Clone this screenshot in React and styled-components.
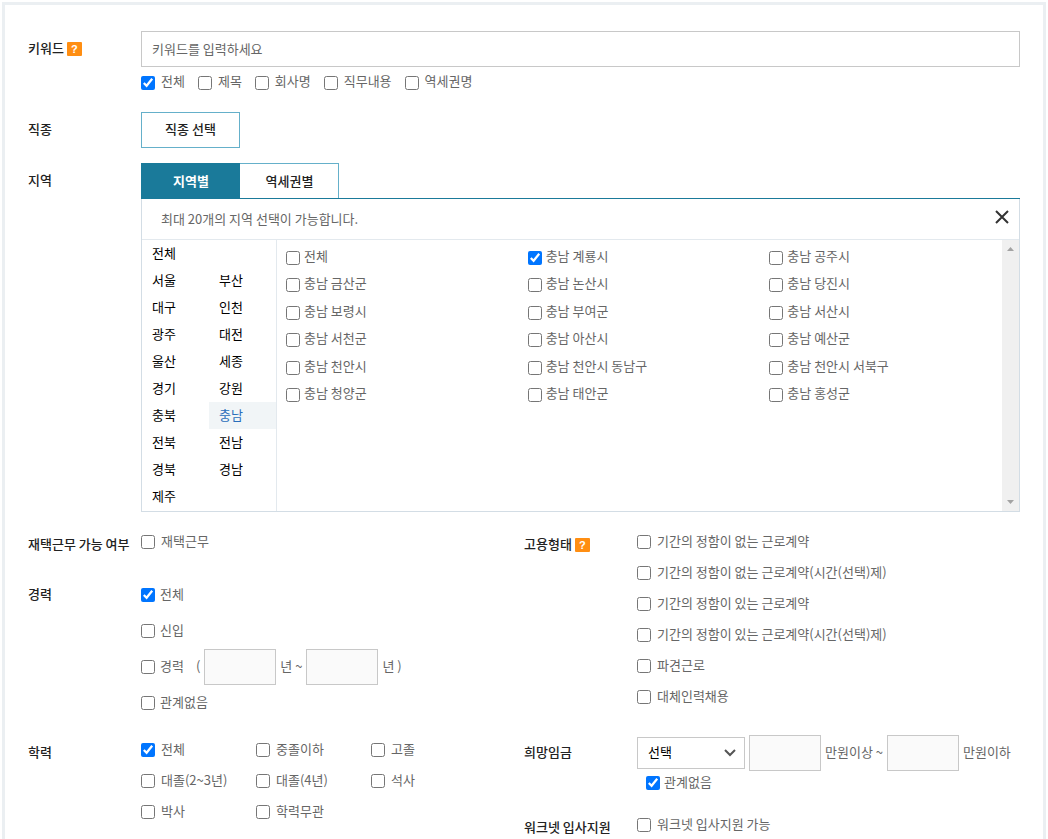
import React, { useState } from "react";
import styled, { createGlobalStyle, css } from "styled-components";

const GlobalStyle = createGlobalStyle`
  *, *::before, *::after { box-sizing: border-box; }
  html { background: #fff; }
  body {
    margin: 0;
    color: #666;
    font: 13px/20px "Noto Sans CJK KR", "Noto Sans", sans-serif;
  }
  button, input, select { font: inherit; color: inherit; }
  ul { margin: 0; padding: 0; list-style: none; }
`;

const Panel = styled.form`
  margin: 2px 2px 0;
  min-height: calc(100vh - 2px);
  padding: 26px 23px 0;
  border: 3px solid #ebeff2;
  border-bottom: 0;
  background: #fff;
`;

const Stack = styled.div`
  display: flex;
  flex-direction: column;
  gap: 15px;
`;

const Columns = styled.div`
  display: grid;
  grid-template-columns: 1fr 1fr;
  align-items: start;
  margin-top: ${(p) => (p.$first ? 15 : 14)}px;
`;

const Field = styled.div`
  display: grid;
  grid-template-columns: 113px minmax(0, 1fr);
  align-items: start;
  min-height: 35px;
`;

const FieldTitle = styled.div`
  display: flex;
  align-items: center;
  gap: 3px;
  line-height: 34px;
  font-weight: 500;
  color: #222;
  white-space: nowrap;
`;

const HelpButton = styled.button`
  width: 15px;
  height: 14px;
  margin-top: 2px;
  padding: 0;
  border: 0;
  border-radius: 1px;
  background: #ff8e12;
  color: #fff;
  font: bold 11px/14px "Liberation Sans", sans-serif;
  cursor: pointer;
`;

const KeywordInput = styled.input`
  display: block;
  width: 100%;
  height: 36px;
  padding: 0 10px 2px;
  border: 1px solid #c8c8c8;
  border-radius: 0;
  background: #fff;
  &::placeholder { color: #666; opacity: 1; }
`;

const CheckLabel = styled.label`
  display: flex;
  align-items: center;
  gap: ${(p) => p.$gap ?? 6}px;
  padding-bottom: 2px;
  white-space: nowrap;
`;

const CheckBox = styled.input`
  flex: none;
  width: 14px;
  height: 14px;
  margin: 2px 0 0;
`;

const InlineChecks = styled.div`
  display: flex;
  flex-wrap: wrap;
  gap: 0 13px;
  min-height: 30px;
  align-items: center;
  ${CheckBox} { margin-top: 4px; }
`;

const CheckList = styled.div`
  display: grid;
  grid-template-columns: ${(p) => (p.$columns ? `repeat(${p.$columns}, 115px)` : "auto")};
  grid-auto-rows: ${(p) => (p.$tall ? 36 : 31)}px;
  > ${CheckLabel} { padding-bottom: ${(p) => (p.$tall ? 2 : 4)}px; }
`;

const OutlineButton = styled.button`
  width: 99px;
  height: 36px;
  padding: 0 0 2px;
  border: 1px solid #65b0ca;
  background: #fff;
  color: #222;
  font-weight: 500;
  cursor: pointer;
`;

const TabBar = styled.div`
  display: flex;
  height: 36px;
  border-bottom: 1px solid #1a7a9a;
`;

const Tab = styled.button`
  width: 99px;
  padding: 0 0 1px 1px;
  border: 1px solid #65b0ca;
  border-width: 1px 1px 0 0;
  background: #fff;
  color: #222;
  font-weight: 500;
  cursor: pointer;
  ${(p) =>
    p.$active &&
    css`
      border-left-width: 1px;
      border-color: #1a7a9a;
      background: #1a7a9a;
      color: #fff;
      font-weight: 700;
    `}
`;

const RegionBox = styled.div`
  border: 1px solid #d3dde5;
  border-top: 0;
`;

const RegionHead = styled.div`
  display: flex;
  align-items: center;
  justify-content: space-between;
  height: 41px;
  padding: 0 10px 0 19px;
  border-bottom: 1px solid #e3e9ee;
`;

const CloseButton = styled.button`
  display: flex;
  padding: 0 0 5px;
  border: 0;
  background: none;
  color: #333;
  cursor: pointer;
`;

const RegionBody = styled.div`
  display: flex;
  min-height: 271px;
`;

const ProvinceList = styled.ul`
  display: grid;
  flex: none;
  grid-template-columns: 67px 67px;
  grid-auto-rows: 27px;
  align-content: start;
  border-right: 1px solid #e3e9ee;
`;

const Province = styled.li`
  grid-column: ${(p) => (p.$wide ? "1 / -1" : "auto")};
`;

const ProvinceButton = styled.button`
  display: block;
  width: 100%;
  height: 27px;
  padding: 0 10px 2px;
  border: 0;
  background: ${(p) => (p.$active ? "#f1f5f7" : "none")};
  color: ${(p) => (p.$active ? "#2a6ebb" : "#000")};
  text-align: left;
  cursor: pointer;
`;

const CityList = styled.div`
  display: grid;
  flex: 1;
  grid-template-columns: repeat(3, minmax(0, 1fr));
  grid-template-rows: repeat(6, 1fr);
  height: 165px;
  margin-top: 3px;
  padding-left: 9px;
  margin-right: -9px;
  ${CheckBox} { margin-top: 4px; }
`;

const ScrollTrack = styled.div`
  display: flex;
  flex: none;
  flex-direction: column;
  justify-content: space-between;
  align-items: center;
  width: 17px;
  padding: 7px 0;
  background: #f0f0f0;
  z-index: 1;
`;

const NumberInput = styled.input`
  flex: none;
  width: 72px;
  height: 36px;
  padding: 0 8px;
  border: 1px solid #c8c8c8;
  border-radius: 0;
  background: #fafafa;
`;

const CareerRow = styled.div`
  display: flex;
  align-items: center;
  gap: 12px;
`;

const RangeRow = styled.div`
  display: flex;
  align-items: center;
  gap: 4px;
  white-space: nowrap;
`;

const Unit = styled.span`
  padding-bottom: 2px;
`;

const SelectWrap = styled.div`
  display: grid;
  width: 108px;
  align-items: center;
  > * { grid-area: 1 / 1; }
  > svg { justify-self: end; margin-right: 9px; pointer-events: none; }
`;

const Select = styled.select`
  appearance: none;
  width: 100%;
  height: 32px;
  padding: 0 10px 2px;
  border: 1px solid #c8c8c8;
  border-radius: 0;
  background: #fff;
  color: #000;
`;

const NoPreference = styled.div`
  display: flex;
  height: 24px;
  padding-left: 9px;
`;

function Check({ children, checked = false, gap }) {
  return (
    <CheckLabel $gap={gap}>
      <CheckBox type="checkbox" defaultChecked={checked} />
      {children}
    </CheckLabel>
  );
}

function FormField({ title, help, children }) {
  return (
    <Field role="group" aria-label={title}>
      <FieldTitle>
        {title}
        {help && <HelpButton type="button" aria-label={`${title} 도움말`}>?</HelpButton>}
      </FieldTitle>
      <div>{children}</div>
    </Field>
  );
}

const provinces = [
  "전체", "서울", "부산", "대구", "인천", "광주", "대전", "울산", "세종", "경기",
  "강원", "충북", "충남", "전북", "전남", "경북", "경남", "제주",
];

const cities = [
  "전체", "충남 계룡시", "충남 공주시",
  "충남 금산군", "충남 논산시", "충남 당진시",
  "충남 보령시", "충남 부여군", "충남 서산시",
  "충남 서천군", "충남 아산시", "충남 예산군",
  "충남 천안시", "충남 천안시 동남구", "충남 천안시 서북구",
  "충남 청양군", "충남 태안군", "충남 홍성군",
];

const contracts = [
  "기간의 정함이 없는 근로계약",
  "기간의 정함이 없는 근로계약(시간(선택)제)",
  "기간의 정함이 있는 근로계약",
  "기간의 정함이 있는 근로계약(시간(선택)제)",
  "파견근로",
  "대체인력채용",
];

const schools = ["전체", "중졸이하", "고졸", "대졸(2~3년)", "대졸(4년)", "석사", "박사", "학력무관"];

export default function App() {
  const [tab, setTab] = useState("지역별");
  const [province, setProvince] = useState("충남");

  return (
    <>
      <GlobalStyle />
      <Panel onSubmit={(e) => e.preventDefault()}>
        <Stack>
          <FormField title="키워드" help>
            <KeywordInput type="text" aria-label="키워드" placeholder="키워드를 입력하세요" />
            <InlineChecks>
              {["전체", "제목", "회사명", "직무내용", "역세권명"].map((name, i) => (
                <Check key={name} checked={i === 0}>{name}</Check>
              ))}
            </InlineChecks>
          </FormField>

          <FormField title="직종">
            <OutlineButton type="button">직종 선택</OutlineButton>
          </FormField>

          <FormField title="지역">
            <TabBar role="tablist">
              {["지역별", "역세권별"].map((name) => (
                <Tab
                  key={name}
                  type="button"
                  role="tab"
                  aria-selected={tab === name}
                  $active={tab === name}
                  onClick={() => setTab(name)}
                >
                  {name}
                </Tab>
              ))}
            </TabBar>
            <RegionBox>
              <RegionHead>
                <span>최대 20개의 지역 선택이 가능합니다.</span>
                <CloseButton type="button" aria-label="닫기">
                  <svg width="14" height="14" viewBox="0 0 14 14" fill="none" stroke="currentColor" strokeWidth="2">
                    <path d="M1 1l12 12M13 1L1 13" />
                  </svg>
                </CloseButton>
              </RegionHead>
              <RegionBody>
                <ProvinceList>
                  {provinces.map((name, i) => (
                    <Province key={name} $wide={i === 0}>
                      <ProvinceButton
                        type="button"
                        $active={province === name}
                        onClick={() => setProvince(name)}
                      >
                        {name}
                      </ProvinceButton>
                    </Province>
                  ))}
                </ProvinceList>
                <CityList>
                  {cities.map((name, i) => (
                    <Check key={name} gap={4} checked={i === 1}>{name}</Check>
                  ))}
                </CityList>
                <ScrollTrack aria-hidden="true">
                  <svg width="7" height="4" viewBox="0 0 7 4" fill="#a3a3a3"><path d="M0 4L3.5 0L7 4z" /></svg>
                  <svg width="7" height="4" viewBox="0 0 7 4" fill="#a3a3a3"><path d="M0 0L3.5 4L7 0z" /></svg>
                </ScrollTrack>
              </RegionBody>
            </RegionBox>
          </FormField>
        </Stack>

        <Columns $first>
          <Stack>
            <FormField title="재택근무 가능 여부">
              <CheckList>
                <Check>재택근무</Check>
              </CheckList>
            </FormField>
            <FormField title="경력">
              <CheckList $tall>
                <Check gap={5} checked>전체</Check>
                <Check gap={5}>신입</Check>
                <CareerRow>
                  <Check gap={5}>경력</Check>
                  <RangeRow>
                    <Unit>(</Unit>
                    <NumberInput type="text" aria-label="최소 경력 년수" />
                    <Unit>년 ~</Unit>
                    <NumberInput type="text" aria-label="최대 경력 년수" />
                    <Unit>년 )</Unit>
                  </RangeRow>
                </CareerRow>
                <Check gap={5}>관계없음</Check>
              </CheckList>
            </FormField>
          </Stack>
          <FormField title="고용형태" help>
            <CheckList>
              {contracts.map((name) => (
                <Check key={name}>{name}</Check>
              ))}
            </CheckList>
          </FormField>
        </Columns>

        <Columns>
          <FormField title="학력">
            <CheckList $columns={3}>
              {schools.map((name, i) => (
                <Check key={name} checked={i === 0}>{name}</Check>
              ))}
            </CheckList>
          </FormField>
          <Stack>
            <FormField title="희망임금">
              <RangeRow>
                <SelectWrap>
                  <Select aria-label="희망임금 구분">
                    <option>선택</option>
                  </Select>
                  <svg width="12" height="8" viewBox="0 0 12 8" fill="none" stroke="#555" strokeWidth="2">
                    <path d="M1 1l5 5l5-5" />
                  </svg>
                </SelectWrap>
                <NumberInput type="text" aria-label="최소 임금" />
                <Unit>만원이상 ~</Unit>
                <NumberInput type="text" aria-label="최대 임금" />
                <Unit>만원이하</Unit>
              </RangeRow>
              <NoPreference>
                <Check gap={4} checked>관계없음</Check>
              </NoPreference>
            </FormField>
            <FormField title="워크넷 입사지원">
              <CheckList>
                <Check>워크넷 입사지원 가능</Check>
              </CheckList>
            </FormField>
          </Stack>
        </Columns>
      </Panel>
    </>
  );
}
